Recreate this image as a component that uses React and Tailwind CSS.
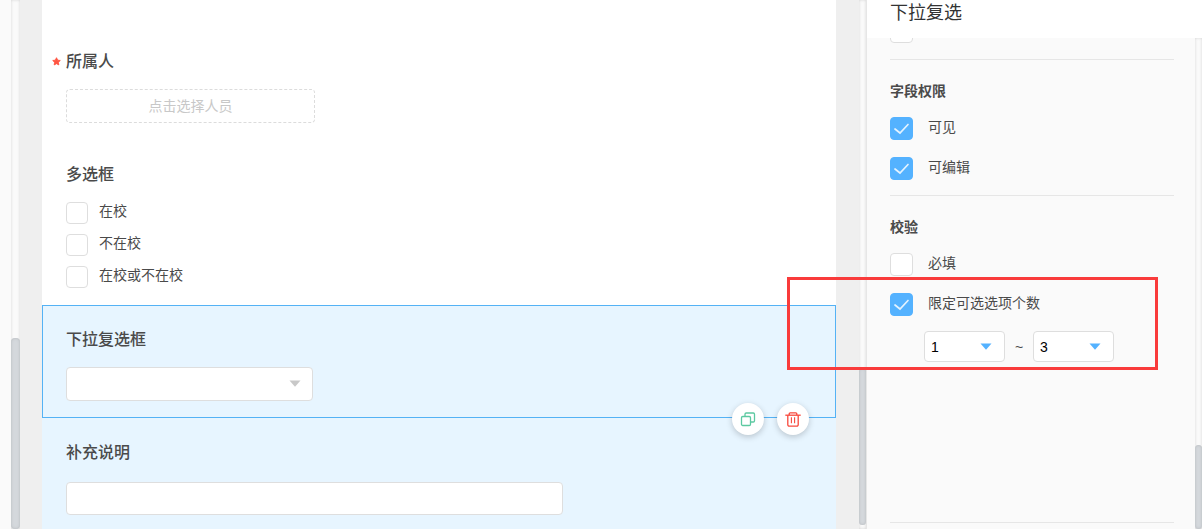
import React, { useState } from 'react';
import clsx from 'clsx';

function CaretIcon({ className }) {
  return (
    <svg viewBox="0 0 12 7" className={clsx('pointer-events-none absolute w-3 h-[7px]', className)}>
      <path d="M0.5 0.5h11L6 6.8z" fill="currentColor" />
    </svg>
  );
}

function CopyIcon() {
  return (
    <svg viewBox="0 0 16 16" className="w-4 h-4" fill="none" stroke="#5cc9a1" strokeWidth="1.3">
      <rect x="1.5" y="5.5" width="9" height="9" rx="1.2" />
      <path d="M5 5.5V3.2A1.2 1.2 0 0 1 6.2 2h7.1a1.2 1.2 0 0 1 1.2 1.2v6.6a1.2 1.2 0 0 1-1.2 1.2h-2.8" />
    </svg>
  );
}

function TrashIcon() {
  return (
    <svg viewBox="0 0 16 16" className="w-4 h-4" fill="none" stroke="#f8483c" strokeWidth="1.3">
      <path d="M0.3 4.2h15.4" />
      <path d="M4.2 4V2.8a1 1 0 0 1 1-1h5.6a1 1 0 0 1 1 1V4" />
      <path d="M2.8 4.2v9.6a1.4 1.4 0 0 0 1.4 1.4h7.6a1.4 1.4 0 0 0 1.4-1.4V4.2" />
      <path d="M6.4 6.2v6M9.6 6.2v6" strokeWidth="1.1" />
    </svg>
  );
}

function StarIcon() {
  return (
    <svg viewBox="0 0 10 10" className="absolute -left-[14px] top-[7px] w-[9px] h-[9px]">
      <path
        d="M5 0.8l1.3 2.7 2.9.4-2.1 2 .5 2.9L5 7.4 2.4 8.8l.5-2.9-2.1-2 2.9-.4z"
        fill="#ff5542"
        stroke="#ff5542"
        strokeLinejoin="round"
      />
    </svg>
  );
}

// Option in the form preview
function FormOption({ label }) {
  return (
    <label className="flex items-start gap-[11px] text-sm leading-[18px] text-[#4a4a4a]">
      <input
        type="checkbox"
        className="appearance-none w-[22px] h-[22px] shrink-0 rounded border border-[#dedede] bg-white checked:bg-[#54b2ff]"
      />
      {label}
    </label>
  );
}

// Option in the settings panel
function SettingOption({ label, defaultChecked }) {
  const [checked, setChecked] = useState(!!defaultChecked);

  return (
    <label className="flex items-start gap-[15px] text-sm leading-5 text-[#4a4a4a]">
      <span className="grid shrink-0">
        <input
          type="checkbox"
          checked={checked}
          onChange={(e) => setChecked(e.target.checked)}
          className="[grid-area:1/1] appearance-none w-[23px] h-[23px] rounded border border-[#dedede] bg-white checked:bg-[#54b2ff] checked:border-[#54b2ff]"
        />
        {checked && (
          <svg viewBox="0 0 23 23" className="[grid-area:1/1] pointer-events-none w-[23px] h-[23px]">
            <path d="M5 12l5 4L18 7.5" fill="none" stroke="#e4f3ff" strokeWidth="1.7" strokeLinecap="round" />
          </svg>
        )}
      </span>
      {label}
    </label>
  );
}

function Field({ title, required, selected, className, children }) {
  return (
    <section
      className={clsx(
        'relative border px-[23px] pt-[22px] pb-4',
        selected ? 'border-[#54b2f5] bg-[#e7f5ff]' : 'border-transparent',
        className
      )}
    >
      <h3 className="relative mb-[15px] text-base leading-6 font-medium text-[#4a4a4a]">
        {required && <StarIcon />}
        {title}
      </h3>
      {children}
    </section>
  );
}

function SettingSection({ title, children }) {
  return (
    <section className="border-t border-[#e6e6e6] pt-[21px] pb-[15px]">
      <h3 className="mb-4 text-sm leading-5 font-bold text-[#4a4a4a]">{title}</h3>
      <div className="flex flex-col gap-[17px]">{children}</div>
    </section>
  );
}

function CountSelect({ label, defaultValue }) {
  return (
    <div className="relative w-[81px]">
      <select
        aria-label={label}
        defaultValue={defaultValue}
        className="appearance-none block w-full h-[31px] rounded border border-[#dedede] bg-white pl-1.5 text-sm text-black"
      >
        <option>1</option>
        <option>2</option>
        <option>3</option>
      </select>
      <CaretIcon className="right-[13px] top-3 text-[#54b2ff]" />
    </div>
  );
}

// The padding passed in sets where the thumb starts
function ScrollTrack({ className }) {
  return (
    <div className={clsx('flex flex-col shrink-0 bg-[#fafafa] shadow-[inset_0_0_3px_#d4d4d4]', className)}>
      <div className="flex-1 rounded bg-[#d4d8dc] shadow-[inset_0_0_3px_#b4b8bc]" />
    </div>
  );
}

export default function App() {
  return (
    <div className="flex h-screen overflow-hidden bg-[#efefef] font-['Liberation_Sans','Noto_Sans_CJK_SC',sans-serif]">
      <div className="w-[11px] shrink-0 bg-[#fafafa]" />
      <ScrollTrack className="w-[9px] pt-[338px]" />

      {/* Form preview */}
      <main className="ml-[22px] flex flex-1 flex-col bg-white pt-[27px]">
        <Field title="所属人" required>
          <button
            type="button"
            className="block w-[249px] h-[34px] rounded border border-dashed border-[#dcdcdc] text-sm text-[#c8c8c8]"
          >
            点击选择人员
          </button>
        </Field>

        <Field title="多选框">
          <div className="flex flex-col gap-2.5">
            <FormOption label="在校" />
            <FormOption label="不在校" />
            <FormOption label="在校或不在校" />
          </div>
        </Field>

        <Field title="下拉复选框" selected className="z-10">
          <div className="relative w-[247px]">
            <select
              aria-label="下拉复选框"
              className="appearance-none block w-full h-[34px] rounded border border-[#dedede] bg-white px-2 text-sm"
            >
              <option></option>
            </select>
            <CaretIcon className="right-3 top-[13px] text-[#c8c8c8]" />
          </div>
          <div className="absolute right-[26px] -bottom-[18px] flex gap-[13px]">
            <button
              type="button"
              aria-label="复制"
              className="flex w-8 h-8 items-center justify-center rounded-full bg-white shadow-[0_2px_6px_rgba(0,0,0,0.2)]"
            >
              <CopyIcon />
            </button>
            <button
              type="button"
              aria-label="删除"
              className="flex w-8 h-8 items-center justify-center rounded-full bg-white shadow-[0_2px_6px_rgba(0,0,0,0.2)]"
            >
              <TrashIcon />
            </button>
          </div>
        </Field>

        <Field title="补充说明" className="flex-1 bg-[#e7f5ff]">
          <input
            type="text"
            aria-label="补充说明"
            className="mt-[17px] block w-[497px] max-w-full h-[33px] rounded border border-[#dedede] bg-white px-2 text-sm"
          />
        </Field>
      </main>

      <ScrollTrack className="ml-[23px] w-[7px] pt-[368px] pb-1" />

      {/* Field settings */}
      <aside className="relative flex w-[336px] shrink-0 flex-col border-l border-[#e6e6e6] bg-[#fafafa]">
        <h2 className="h-[38px] shrink-0 bg-white pl-[23px] text-lg leading-[26px] text-[#333]">下拉复选</h2>
        <div className="flex flex-1">
          <div className="flex-1 pl-[23px] pr-[21px]">
            <div className="mb-4 flex h-[5px] items-end overflow-hidden">
              <input
                type="checkbox"
                aria-label="选项"
                className="appearance-none w-[23px] h-[23px] shrink-0 rounded border border-[#dedede] bg-white"
              />
            </div>

            <SettingSection title="字段权限">
              <SettingOption label="可见" defaultChecked />
              <SettingOption label="可编辑" defaultChecked />
            </SettingSection>

            <SettingSection title="校验">
              <SettingOption label="必填" />
              <SettingOption label="限定可选选项个数" defaultChecked />
            </SettingSection>

            <div className="flex items-center pl-[34px] pb-40 border-b border-[#e6e6e6]">
              <CountSelect label="最少" defaultValue="1" />
              <span className="w-7 text-center text-sm text-[#4a4a4a]">~</span>
              <CountSelect label="最多" defaultValue="3" />
            </div>
          </div>
          <ScrollTrack className="w-[7px] pt-[407px]" />
        </div>

        {/* Highlight over the count limit */}
        <div className="pointer-events-none absolute right-[44px] top-[277px] z-20 w-[371px] h-[93px] border-3 border-[#f93b3b]" />
      </aside>
    </div>
  );
}
